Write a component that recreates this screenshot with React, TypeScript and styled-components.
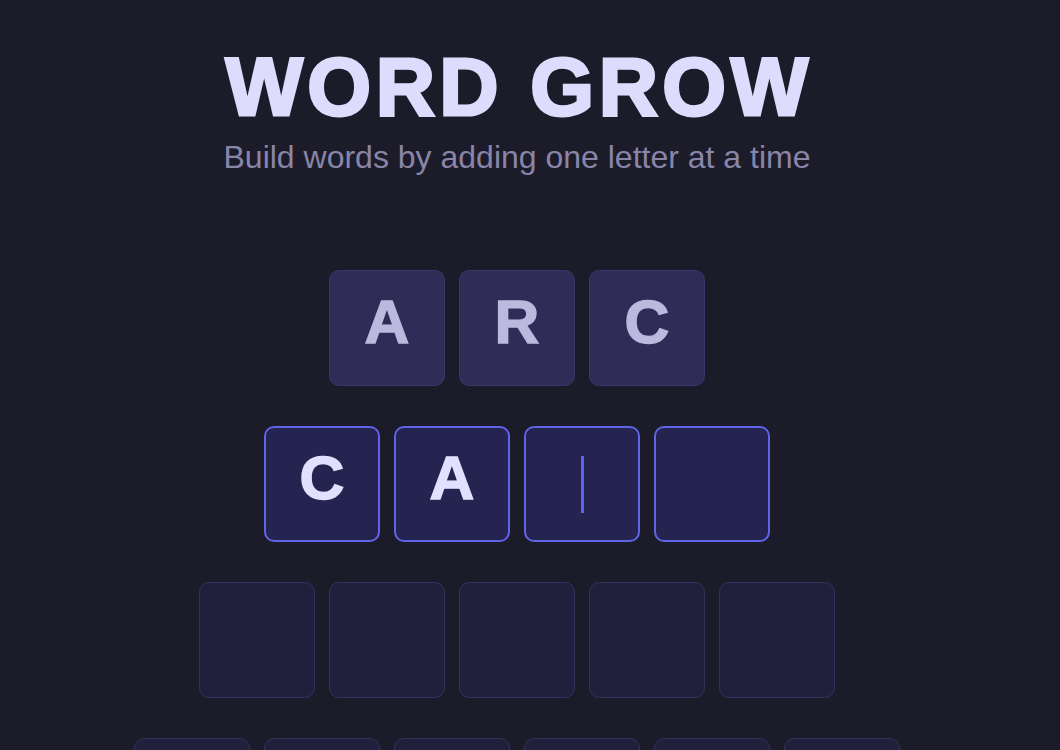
import React from 'react';
import styled, { createGlobalStyle, css } from 'styled-components';

type TileState = 'done' | 'active' | 'empty';

const rows: { state: TileState; letters: string[]; cursor?: number }[] = [
  { state: 'done', letters: ['A', 'R', 'C'] },
  { state: 'active', letters: ['C', 'A', '', ''], cursor: 2 },
  { state: 'empty', letters: ['', '', '', '', ''] },
  { state: 'empty', letters: ['', '', '', '', '', ''] },
];

const App = () => {
  return (
    <Page>
      <GlobalStyle />
      <Header>
        <Title>WORD GROW</Title>
        <Subtitle>Build words by adding one letter at a time</Subtitle>
      </Header>
      <Board>
        {rows.map((row, r) => (
          <Row key={r}>
            {row.letters.map((letter, i) => (
              <Tile key={i} $state={row.state}>
                {letter}
                {row.cursor === i && <Caret />}
              </Tile>
            ))}
          </Row>
        ))}
      </Board>
    </Page>
  );
};

const GlobalStyle = createGlobalStyle`
  html, body {
    margin: 0;
    height: 100%;
    overflow: hidden;
    background: #1c1b29;
  }
`;

const Page = styled.div`
  display: flex;
  flex-direction: column;
  align-items: center;
  padding: 46px 26px 0 0;
  font-family: 'Liberation Sans', Arial, sans-serif;
`;

const Header = styled.header`
  display: flex;
  flex-direction: column;
  align-items: center;
  gap: 13px;
`;

const Title = styled.h1`
  margin: 0 -4px 0 0;
  font-size: 82px;
  line-height: 1;
  font-weight: 700;
  letter-spacing: 4.5px;
  color: #dedcfc;
  -webkit-text-stroke: 3px #dedcfc;
`;

const Subtitle = styled.p`
  margin: 0;
  font-size: 32px;
  line-height: 1;
  color: #8985a8;
`;

const Board = styled.div`
  display: flex;
  flex-direction: column;
  align-items: center;
  gap: 40px;
  margin-top: 97px;
`;

const Row = styled.div`
  display: flex;
  gap: 14px;
`;

const tileStates = {
  done: css`
    background: #2f2d58;
    border: 1.5px solid #383666;
    color: #bcb8de;
    -webkit-text-stroke: 1.5px #bcb8de;
  `,
  active: css`
    background: #252451;
    border: 2px solid #6063e6;
    color: #e2e0ff;
    -webkit-text-stroke: 1.5px #e2e0ff;
  `,
  empty: css`
    background: #201f3c;
    border: 1.5px solid #33325c;
    color: transparent;
  `,
};

const Tile = styled.div<{ $state: TileState }>`
  position: relative;
  box-sizing: border-box;
  width: 116px;
  height: 116px;
  padding-bottom: 12px;
  border-radius: 10px;
  display: flex;
  align-items: center;
  justify-content: center;
  font-size: 62px;
  line-height: 1;
  font-weight: 700;
  ${(p) => tileStates[p.$state]}
`;

const Caret = styled.span`
  width: 3px;
  height: 57px;
  margin-top: 12px;
  background: #6063e6;
  -webkit-text-stroke: 0;
`;

export default App;
